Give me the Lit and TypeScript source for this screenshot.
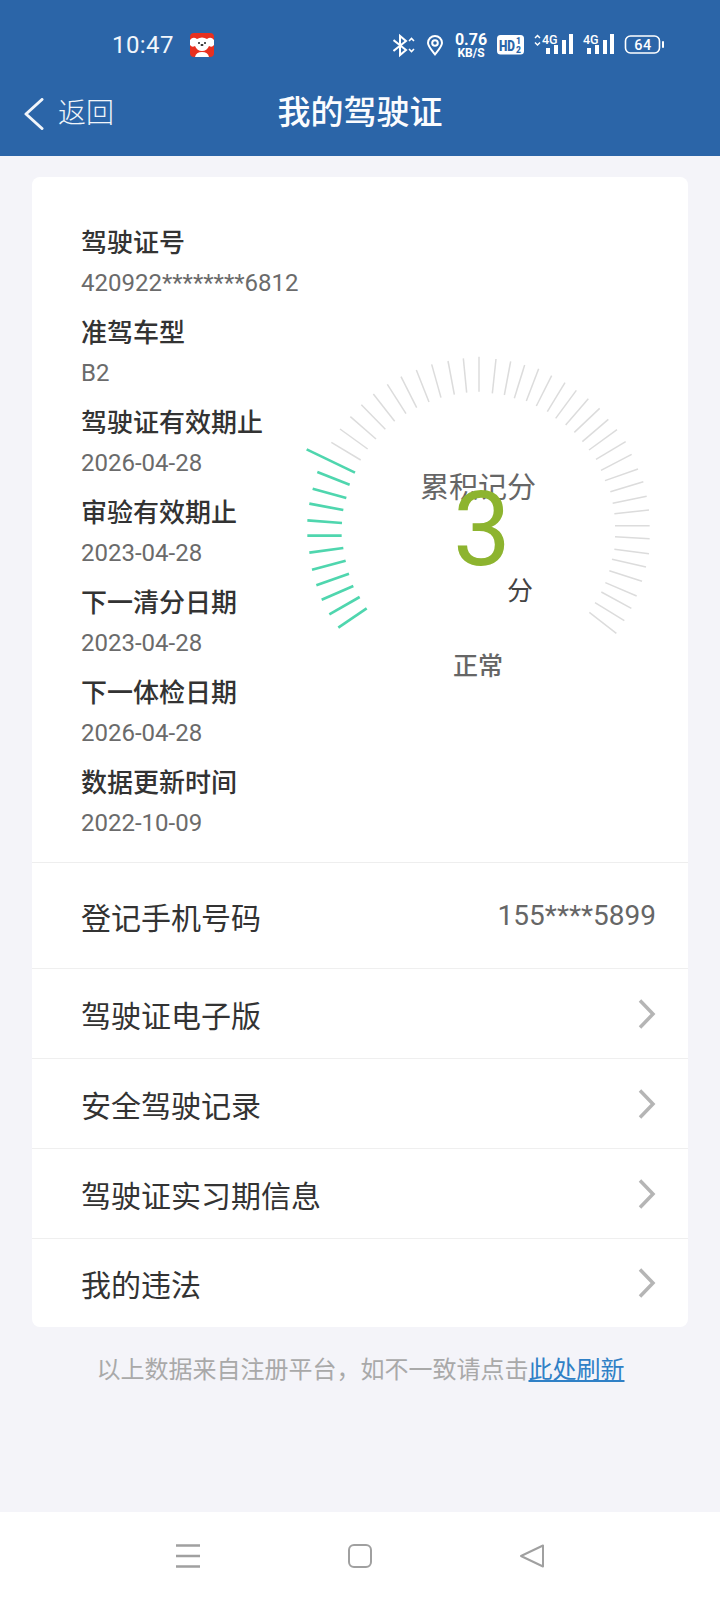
import { LitElement, html, css, svg } from "lit";
import { customElement } from "lit/decorators.js";

type Seg = [number, number, number, number];

const TEAL: Seg[] = [
  [145,863,230,805],[118,823,209,771],[95,779,190,738],[79,736,177,701],[66,689,167,662],[58,638,160,624],
  [52,587,155,587],[52,541,156,549],[58,491,160,510],[68,446,169,474],[82,396,179,434],[50,328,195,398],
];
const GRAY: Seg[] = [
  [124,307,212,360],[150,267,233,327],[181,230,258,297],[214,194,286,268],[250,162,314,244],[292,133,348,221],
  [333,110,380,203],[379,90,417,186],[425,73,453,173],[474,63,493,164],[520,55,530,158],[567,50,567,155],
  [618,57,607,160],[662,64,643,165],[704,75,673,175],[746,86,709,183],[785,107,739,198],[825,128,772,215],
  [859,151,797,235],[895,176,827,255],[929,205,853,277],[955,238,877,305],[981,269,897,330],[1007,305,918,358],
  [1025,343,933,391],[1044,387,945,422],[1060,425,961,455],[1070,469,968,490],[1077,510,973,521],[1079,557,975,557],
  [1079,596,975,590],[1077,641,973,628],[1068,681,966,658],[1056,724,958,692],[1040,768,946,728],[1024,805,934,756],
  [1003,842,915,788],[979,880,898,817],
];

const INFO = [
  ["驾驶证号", "420922********6812"],
  ["准驾车型", "B2"],
  ["驾驶证有效期止", "2026-04-28"],
  ["审验有效期止", "2023-04-28"],
  ["下一清分日期", "2023-04-28"],
  ["下一体检日期", "2026-04-28"],
  ["数据更新时间", "2022-10-09"],
];
const LINKS = ["驾驶证电子版", "安全驾驶记录", "驾驶证实习期信息", "我的违法"];

@customElement("app-root")
export class AppRoot extends LitElement {
  static styles = css`
    :host {
      display: block;
      width: 720px;
      height: 1600px;
      background: #f4f4f9;
      font-family: Roboto, "Noto Sans CJK SC", sans-serif;
      position: relative;
      overflow: hidden;
    }
    .page { display: flex; flex-direction: column; height: 1600px; }
    .top { background: #2b65a8; height: 156px; color: #fff; display: flex; flex-direction: column; flex: none; }
    .status { height: 90px; display: flex; align-items: center; padding-left: 112px; padding-right: 45px; }
    .time { font-size: 24px; letter-spacing: 0.4px; color: #f2f6fb; width: 62px; line-height: 30px; }
    .jd { width: 24px; height: 24px; margin-left: 16px; display: block; }
    .spacer { flex: 1; }
    .sicons { display: block; }
    .nav { height: 66px; position: relative; display: flex; align-items: flex-start; }
    .back { display: flex; align-items: center; margin-left: 24px; margin-top: 6px; height: 36px; }
    .back svg { display: block; }
    .back span { font-size: 28px; margin-left: 14px; color: #f1f5fa; line-height: 36px; font-weight: 300; }
    .title {
      position: absolute; left: 0; right: 0; top: 0; text-align: center;
      font-size: 33px; font-weight: 500; line-height: 46px; padding-right: 0; margin-left: 0;
      color: #fbfcfe;
    }
    .card {
      margin: 21px 32px 0; background: #fff; border-radius: 8px; flex: none;
    }
    .summary { display: flex; height: 686px; border-bottom: 1px solid #eeeeee; box-sizing: border-box; }
    .info { width: 209px; padding: 46px 0 0 49px; flex: none; }
    .item { margin-bottom: 10px; }
    .label { font-size: 26px; line-height: 40px; color: #333; white-space: nowrap; font-weight: 500; }
    .value { font-size: 24px; line-height: 40px; color: #6b6b6b; white-space: nowrap; }
    .gauge { position: relative; width: 380px; height: 340px; margin-top: 163px; flex: none; }
    .gauge svg { position: absolute; left: 0; top: 0; display: block; }
    .g-title { position: absolute; left: 0; width: 376px; top: 126px; text-align: center; font-size: 29px; line-height: 44px; color: #666; }
    .g-num { position: absolute; left: 163px; top: 130px; font-size: 103px; line-height: 120px; color: #8db42f; }
    .g-unit { position: absolute; left: 217px; top: 231px; font-size: 26px; line-height: 40px; color: #444; }
    .g-state { position: absolute; left: 0; width: 376px; top: 307px; text-align: center; font-size: 25px; line-height: 40px; color: #666; font-weight: 500; }
    .row { display: flex; align-items: center; justify-content: space-between; padding: 0 32px 0 49px; height: 90px; box-sizing: border-box; border-bottom: 1px solid #efefef; }
    .row:last-child { border-bottom: none; height: 88px; }
    .row.phone { height: 106px; }
    .row .name { font-size: 30px; color: #333; }
    .row .num { font-size: 28px; color: #666; }
    .row svg { display: block; }
    .note { margin-top: 23px; text-align: center; font-size: 24px; line-height: 40px; color: #a9a9a9; padding-left: 1px; }
    .note a { color: #2f80c6; text-decoration: underline; }
    .grow { flex: 1; }
    .bottom { height: 88px; background: #fff; flex: none; display: flex; justify-content: center; align-items: flex-start; padding-top: 32px; box-sizing: border-box; gap: 148px; }
    .bottom svg { display: block; }
  `;

  private status() {
    return html`<svg class="sicons" width="282" height="40" viewBox="404 26 282 40" fill="none" stroke="#fff">
      <path d="M404.5 41 L417 51 L411 56 V37 L417 42 L404.5 52" stroke-width="2"/>
      <path d="M420 42 l2.5 -2.5 l2.5 2.5 M420 50 l2.5 2.5 l2.5 -2.5" stroke-width="1.6"/>
      <path d="M446 55.5 c-4 -5 -7 -8.5 -7 -11.5 a7 7 0 0 1 14 0 c0 3 -3 6.500 -7 11.500 z" stroke-width="2"/>
      <circle cx="446" cy="44" r="2.800" stroke-width="2"/>
      <g stroke="none" fill="#fff" font-family="Roboto, sans-serif" font-weight="700">
        <text x="482" y="46" font-size="16" text-anchor="middle">0.76</text>
        <text x="482" y="58" font-size="12" text-anchor="middle">KB/S</text>
      </g>
      <rect x="508" y="36" width="27" height="19.500" rx="3.500" fill="#fff" stroke="none"/>
      <g stroke="none" fill="#2b65a8" font-family="Roboto, sans-serif" font-weight="900">
        <text x="510" y="51.500" font-size="15" textLength="16" lengthAdjust="spacingAndGlyphs">HD</text>
        <text x="527" y="44.500" font-size="8.500">1</text>
        <text x="527" y="53.500" font-size="8.500">2</text>
      </g>
      <path d="M546 39 l2.500 -2.500 l2.500 2.500 M546 43.500 l2.500 2.500 l2.500 -2.500" stroke-width="1.500"/>
      <g stroke="none" fill="#fff" font-family="Roboto, sans-serif" font-weight="500">
        <text x="553" y="45" font-size="12.500">4G</text>
        <text x="594" y="45" font-size="12.500">4G</text>
        <rect x="557" y="49" width="4" height="6"/><rect x="565" y="46" width="4" height="9"/>
        <rect x="573" y="41" width="4" height="14"/><rect x="580" y="35" width="4" height="20"/>
        <rect x="598" y="49" width="4" height="6"/><rect x="606" y="46" width="4" height="9"/>
        <rect x="614" y="41" width="4" height="14"/><rect x="621" y="35" width="4" height="20"/>
        <rect x="673" y="42" width="2" height="7" rx="1"/>
        <text x="654" y="51" font-size="14.500" text-anchor="middle" font-weight="500" letter-spacing="0.600">64</text>
      </g>
      <rect x="636.500" y="37" width="34" height="17" rx="5" stroke-width="1.600"/>
    </svg>`;
  }

  private gauge() {
    return html`<svg width="380" height="340" viewBox="0 0 1140 1020" fill="none" stroke-linecap="butt">
      ${GRAY.map(([a, b, c, d]) => svg`<line x1=${a} y1=${b} x2=${c} y2=${d} stroke="#dcdcdc" stroke-width="4.500"/>`)}
      ${TEAL.map(([a, b, c, d]) => svg`<line x1=${a} y1=${b} x2=${c} y2=${d} stroke="#4fd6ae" stroke-width="8"/>`)}
    </svg>`;
  }

  render() {
    return html`<div class="page">
      <div class="top">
        <div class="status">
          <span class="time">10:47</span>
          <svg class="jd" viewBox="0 0 24 24">
            <rect width="24" height="24" rx="4" fill="#e8301f"/>
            <path d="M0 7 Q3 3 7 6 Q12 3 17 6 Q21 3 24 7 V12 Q22 15 19 13 Q17 18 12 18 Q7 18 5 13 Q2 15 0 12 Z" fill="#fff"/>
            <path d="M5 24 Q6 19 12 19 Q18 19 19 24 Z" fill="#fff"/>
            <circle cx="9" cy="10" r="1" fill="#222"/><circle cx="15" cy="10" r="1" fill="#222"/>
            <ellipse cx="12" cy="12" rx="1.500" ry="1" fill="#222"/>
          </svg>
          <span class="spacer"></span>
          ${this.status()}
        </div>
        <div class="nav">
          <div class="back">
            <svg width="20" height="32" viewBox="0 0 20 32" fill="none" stroke="#f1f5fa" stroke-width="3" stroke-linecap="round" stroke-linejoin="round"><path d="M18 1.500 L2 16 L18 30.500"/></svg>
            <span>返回</span>
          </div>
          <div class="title">我的驾驶证</div>
        </div>
      </div>
      <div class="card">
        <div class="summary">
          <div class="info">
            ${INFO.map(([l, v]) => html`<div class="item"><div class="label">${l}</div><div class="value">${v}</div></div>`)}
          </div>
          <div class="gauge">
            ${this.gauge()}
            <div class="g-title">累积记分</div>
            <div class="g-num">3</div>
            <div class="g-unit">分</div>
            <div class="g-state">正常</div>
          </div>
        </div>
        <div class="row phone"><span class="name">登记手机号码</span><span class="num">155****5899</span></div>
        ${LINKS.map((n) => html`<div class="row"><span class="name">${n}</span>
          <svg width="18" height="30" viewBox="0 0 18 30" fill="none" stroke="#b5b5b5" stroke-width="3.500"><path d="M2 1.500 L15 15 L2 28.500"/></svg></div>`)}
      </div>
      <div class="note">以上数据来自注册平台，如不一致请点击<a>此处刷新</a></div>
      <div class="grow"></div>
      <div class="bottom">
        <svg width="24" height="24" viewBox="0 0 24 24" stroke="#a0a0a0" stroke-width="2.500"><path d="M0 1.500 H24 M0 12 H24 M0 22.500 H24"/></svg>
        <svg width="24" height="24" viewBox="0 0 24 24" fill="none" stroke="#a0a0a0" stroke-width="2"><rect x="1" y="1" width="22" height="22" rx="5"/></svg>
        <svg width="24" height="24" viewBox="0 0 24 24" fill="none" stroke="#a0a0a0" stroke-width="2" stroke-linejoin="round"><path d="M23 1.500 V22.500 L1 12 Z"/></svg>
      </div>
    </div>`;
  }
}
